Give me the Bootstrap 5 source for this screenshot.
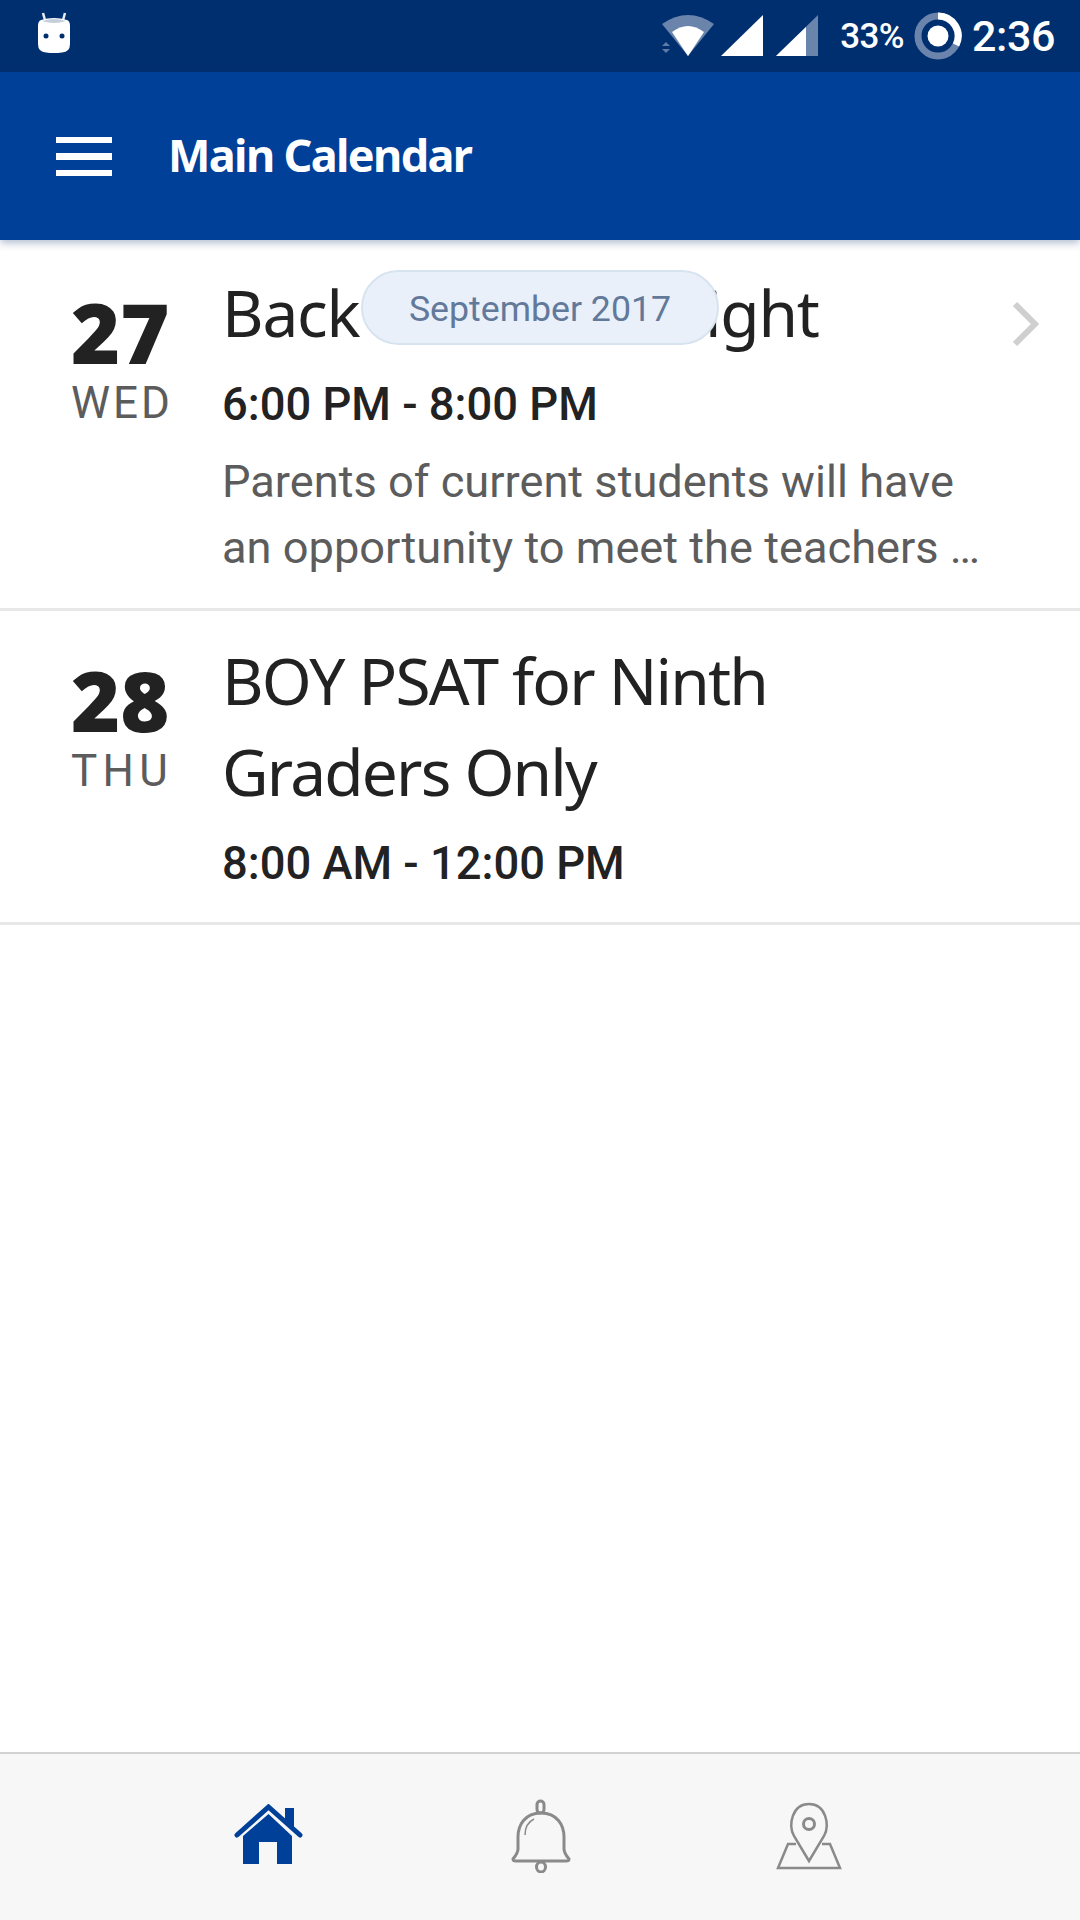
<!DOCTYPE html>
<html lang="en">
<head>
    <meta charset="UTF-8">
    <meta name="viewport" content="width=device-width, initial-scale=1.0">
    <title>Main Calendar</title>
    <link href="https://cdn.jsdelivr.net/npm/bootstrap@5.3.0/dist/css/bootstrap.min.css" rel="stylesheet">
    <style>
        html, body { width: 1080px; height: 1920px; margin: 0; overflow: hidden; }
        body { font-family: "Roboto", sans-serif; background: #fff; }
        .phone { width: 1080px; height: 1920px; }
        .status-bar { height: 72px; background: #002f70; padding: 0 25px 0 36px; color: #fff; }
        .status-droid { margin-top: -7px; }
        .status-signal { margin-left: 5px; }
        .status-signal-2 { margin-left: 11px; }
        .status-pct { font-size: 35px; font-weight: 500; letter-spacing: -0.6px; margin-left: 21px; padding-top: 3px; }
        .status-ring { margin-left: 10px; }
        .status-time { font-size: 43px; font-weight: 500; letter-spacing: -0.4px; margin-left: 10px; }
        .app-bar { height: 168px; background: #004098; padding-left: 56px; box-shadow: 0 3px 8px rgba(0, 40, 100, .3); position: relative; z-index: 2; }
        .burger { width: 56px; height: 39px; border-top: 6px solid #fff; border-bottom: 6px solid #fff; position: relative; }
        .burger::after { content: ""; position: absolute; left: 0; right: 0; top: 10px; height: 7px; background: #fff; }
        .app-title { font-family: "Noto Sans", sans-serif; font-weight: 700; font-size: 45px; letter-spacing: -1.65px; color: #fff; margin-left: 56px; margin-bottom: 4px; line-height: 1; }
        .event-list { position: relative; }
        .event-row { border-bottom: 3px solid #e8e8e8; display: flex; position: relative; }
        .event-row-first { height: 371px; }
        .event-row-second { height: 314px; }
        .event-date { width: 222px; flex: none; padding-left: 71px; padding-top: 50px; }
        .event-row-second .event-date { padding-top: 47px; }
        .event-day { font-family: "Noto Sans", sans-serif; font-weight: 900; font-size: 84px; line-height: 1; color: #222; }
        .event-dow { font-size: 44px; line-height: 1; color: #5c5c5c; letter-spacing: 3px; margin-top: 7px; }
        .event-dow-wide { letter-spacing: 5.3px; }
        .event-body { padding-top: 27px; }
        .event-row-second .event-body { padding-top: 24px; }
        .event-name { font-family: "Noto Sans", sans-serif; font-size: 64px; line-height: 91px; color: #222; letter-spacing: -1.8px; }
        .event-row-first .event-name { letter-spacing: -1.2px; }
        .event-time { font-size: 45.3px; font-weight: 500; color: #222; line-height: 50px; margin-top: 22px; }
        .event-desc { font-size: 45.2px; line-height: 66px; color: #5c5c5c; white-space: nowrap; margin-top: 19px; }
        .month-pill { position: absolute; left: 361px; top: 30px; width: 358px; height: 75px; padding-top: 4px; border-radius: 38px; background: #e9f0fa; border: 2px solid #d8e3f0; color: #62799a; font-size: 35.7px; z-index: 3; }
        .event-chevron { position: absolute; left: 1010px; top: 61px; }
        .bottom-bar { height: 168px; background: #f7f7f7; border-top: 2px solid #d2d2d2; position: relative; }
        .bottom-bar svg { position: absolute; }
        .tab-home { left: 234px; top: 50px; }
        .tab-bell { left: 510px; top: 45px; }
        .tab-map { left: 776px; top: 47px; }
    </style>
</head>
<body>
    <div class="phone d-flex flex-column">
        <div class="status-bar d-flex align-items-center flex-shrink-0">
            <svg class="status-droid" width="36" height="42" viewBox="0 0 36 42">
                <path d="M7 1l2.5 9M29 1l-2.5 9" stroke="#e8edf3" stroke-width="2.5"/>
                <path d="M5 8Q18 4 31 8Q34 9 34 14V32Q34 40 26 40.500Q18 41.500 10 40.500Q2 40 2 32V14Q2 9 5 8z" fill="#fff"/>
                <path d="M6 9Q18 5 30 9Q18 13 6 9z" fill="#c5ced9"/>
                <circle cx="10" cy="24" r="2.500" fill="#002f70"/><circle cx="26" cy="24" r="2.500" fill="#002f70"/>
            </svg>
            <div class="ms-auto d-flex align-items-center">
                <svg width="54" height="46" viewBox="0 0 54 46">
                    <path d="M1 11Q27 -7 53 11L27 43z" fill="#6a84ab"/>
                    <path d="M11 19Q27 7 43 19L27 43z" fill="#fff"/>
                    <path d="M1 33l4-4 4 4zM1 36h8l-4 4z" fill="#6a84ab" opacity=".9"/>
                </svg>
                <svg class="status-signal" width="44" height="44" viewBox="0 0 44 44"><path d="M43 1V42H1z" fill="#fff"/></svg>
                <svg class="status-signal-2" width="44" height="44" viewBox="0 0 44 44"><path d="M43 1V42H1z" fill="#6a84ab"/><path d="M31 13V42H1z" fill="#fff"/></svg>
                <span class="status-pct">33%</span>
                <svg class="status-ring" width="48" height="48" viewBox="0 0 48 48">
                    <circle cx="24" cy="24" r="20" fill="none" stroke="#6a84ab" stroke-width="7"/>
                    <path d="M24 4A20 20 0 0 1 42 33" fill="none" stroke="#fff" stroke-width="7"/>
                    <circle cx="24" cy="24" r="10.500" fill="#fff"/>
                </svg>
                <span class="status-time">2:36</span>
            </div>
        </div>
        <div class="app-bar d-flex align-items-center flex-shrink-0">
            <div class="burger"></div>
            <div class="app-title">Main Calendar</div>
        </div>
        <div class="event-list flex-grow-1">
            <div class="month-pill d-flex align-items-center justify-content-center">September 2017</div>
            <div class="event-row event-row-first">
                <div class="event-date">
                    <div class="event-day">27</div>
                    <div class="event-dow">WED</div>
                </div>
                <div class="event-body">
                    <div class="event-name">Back to School Night</div>
                    <div class="event-time">6:00 PM - 8:00 PM</div>
                    <div class="event-desc">Parents of current students will have<br>an opportunity to meet the teachers …</div>
                </div>
                <svg class="event-chevron" width="30" height="46" viewBox="0 0 30 46"><path d="M5 3L25 23L5 43" fill="none" stroke="#cfcfcf" stroke-width="6"/></svg>
            </div>
            <div class="event-row event-row-second">
                <div class="event-date">
                    <div class="event-day">28</div>
                    <div class="event-dow event-dow-wide">THU</div>
                </div>
                <div class="event-body">
                    <div class="event-name">BOY PSAT for Ninth<br>Graders Only</div>
                    <div class="event-time">8:00 AM - 12:00 PM</div>
                </div>
            </div>
        </div>
        <div class="bottom-bar flex-shrink-0">
            <svg class="tab-home" width="70" height="62" viewBox="0 0 70 62">
                <path d="M51 4h9v21l-9-8z" fill="#004098"/>
                <path d="M3 31L34.500 3L66 31" fill="none" stroke="#004098" stroke-width="5" stroke-linecap="round"/>
                <path d="M34.500 10L58 32V60H43V38H25V60H9V32z" fill="#004098"/>
            </svg>
            <svg class="tab-bell" width="62" height="74" viewBox="0 0 62 74" fill="none" stroke="#8a8a8a" stroke-width="3">
                <rect x="27" y="2" width="7" height="12" rx="3.500"/>
                <path d="M31 14C15 14 8 26 8 38V50Q8 54 3 60Q3 62 6 62H56Q59 62 59 60Q54 54 54 50V38C54 26 47 14 31 14z"/>
                <ellipse cx="31" cy="68" rx="4.500" ry="5"/>
                <path d="M15 36C15 28 18 23 24 20" stroke-width="1.500"/>
            </svg>
            <svg class="tab-map" width="66" height="70" viewBox="0 0 66 70" fill="none" stroke="#8a8a8a" stroke-width="2.500">
                <path d="M33 60L18 35C12 24 16 3 33 3C50 3 54 24 48 35z"/>
                <circle cx="33" cy="23" r="5.500" stroke-width="3"/>
                <path d="M20 43H12L2 67H64L54 43H46"/>
            </svg>
        </div>
    </div>
    <script src="https://cdn.jsdelivr.net/npm/bootstrap@5.3.0/dist/js/bootstrap.bundle.min.js"></script>
</body>
</html>
